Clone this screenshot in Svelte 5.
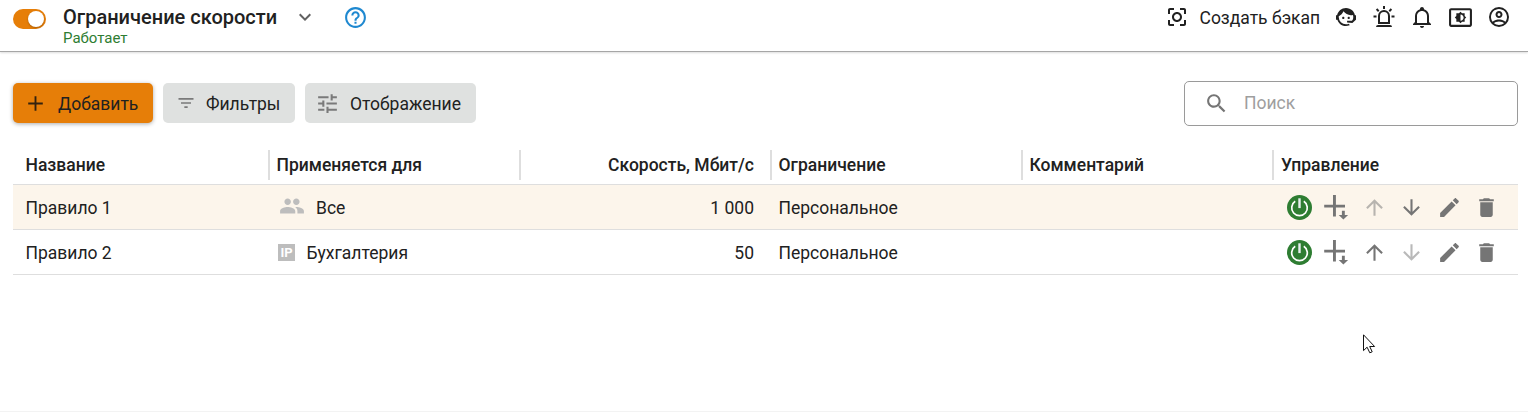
<script>
  const icons = {
    plus: 'M19 12.9h-6.1V19h-1.8v-6.1H5v-1.8h6.1V5h1.8v6.1H19z',
    filter: 'M10 18h4v-2h-4v2zM3 6v2h18V6H3zm3 7h12v-2H6v2z',
    tune: 'M3 17v2h6v-2H3zM3 5v2h10V5H3zm10 16v-2h8v-2h-8v-2h-2v6h2zM7 9v2H3v2h4v2h2V9H7zm14 4v-2H11v2h10zm-6-4h2V7h4V5h-4V3h-2v6z',
    search: 'M15.5 14h-.79l-.28-.27C15.41 12.59 16 11.11 16 9.5 16 5.91 13.09 3 9.5 3S3 5.91 3 9.5 5.91 16 9.5 16c1.61 0 3.09-.59 4.23-1.57l.27.28v.79l5 4.99L20.49 19l-4.99-5zm-6 0C7.01 14 5 11.99 5 9.5S7.01 5 9.5 5 14 7.01 14 9.5 11.99 14 9.5 14z',
    chevron: 'M16.59 8.59 12 13.17 7.41 8.59 6 10l6 6 6-6z',
    help: 'M11 18h2v-2h-2v2zm1-16C6.48 2 2 6.48 2 12s4.48 10 10 10 10-4.48 10-10S17.52 2 12 2zm0 18c-4.41 0-8-3.59-8-8s3.59-8 8-8 8 3.59 8 8-3.59 8-8 8zm0-14c-2.21 0-4 1.79-4 4h2c0-1.1.9-2 2-2s2 .9 2 2c0 2-3 1.75-3 5h2c0-2.25 3-2.5 3-5 0-2.21-1.79-4-4-4z',
    backup: 'M5 15H3v4c0 1.1.9 2 2 2h4v-2H5v-4zM5 5h4V3H5c-1.1 0-2 .9-2 2v4h2V5zm14-2h-4v2h4v4h2V5c0-1.1-.9-2-2-2zm0 16h-4v2h4c1.1 0 2-.9 2-2v-4h-2v4zM12 7c-2.76 0-5 2.24-5 5s2.24 5 5 5 5-2.24 5-5-2.24-5-5-5zm0 8c-1.65 0-3-1.35-3-3s1.35-3 3-3 3 1.35 3 3-1.35 3-3 3z',
    agent: 'M18.72,14.76C19.07,13.91 19.26,13 19.26,12C19.26,11.28 19.15,10.59 18.96,9.95C18.31,10.1 17.63,10.18 16.92,10.18C13.86,10.18 11.15,8.67 9.5,6.34C8.61,8.5 6.91,10.26 4.77,11.22C4.73,11.47 4.73,11.74 4.73,12A7.27,7.27 0 0,0 12,19.27C13.05,19.27 14.06,19.04 14.97,18.63C15.54,19.72 15.8,20.26 15.78,20.26C14.14,20.81 12.87,21.08 12,21.08C9.58,21.08 7.27,20.13 5.57,18.42C4.53,17.38 3.76,16.11 3.33,14.73H2V10.18H3.09C3.93,6.04 7.6,2.92 12,2.92C14.4,2.92 16.71,3.87 18.42,5.58C19.69,6.84 20.54,8.45 20.89,10.18H22V14.73H21.94L18.38,18L13.08,17.4V15.73H17.91L18.72,14.76M9.27,11.77C9.57,11.77 9.86,11.89 10.07,12.11C10.28,12.32 10.4,12.61 10.4,12.91C10.4,13.21 10.28,13.5 10.07,13.71C9.86,13.92 9.57,14.04 9.27,14.04C8.64,14.04 8.13,13.54 8.13,12.91C8.13,12.28 8.64,11.77 9.27,11.77M14.72,11.77C15.35,11.77 15.85,12.28 15.85,12.91C15.85,13.54 15.35,14.04 14.72,14.04C14.09,14.04 13.58,13.54 13.58,12.91A1.14,1.14 0 0,1 14.72,11.77Z',
    siren: 'M6,6.9L3.87,4.78L5.28,3.37L7.4,5.5L6,6.9M13,1V4H11V1H13M20.13,4.78L18,6.9L16.6,5.5L18.72,3.37L20.13,4.78M4.5,10.5V12.5H1.5V10.5H4.5M19.5,10.5H22.5V12.5H19.5V10.5M6,20H18A2,2 0 0,1 20,22H4A2,2 0 0,1 6,20M12,5A6,6 0 0,1 18,11V19H6V11A6,6 0 0,1 12,5M12,7A4,4 0 0,0 8,11V17H16V11A4,4 0 0,0 12,7Z',
    bell: 'M10 21H14C14 22.1 13.1 23 12 23S10 22.1 10 21M21 19V20H3V19L5 17V11C5 7.9 7 5.2 10 4.3V4C10 2.9 10.9 2 12 2S14 2.9 14 4V4.3C17 5.2 19 7.9 19 11V17L21 19M17 11C17 8.2 14.8 6 12 6S7 8.2 7 11V18H17V11Z',
    brightness: 'M21 3H3c-1.1 0-2 .9-2 2v14c0 1.1.9 2 2 2h18c1.1 0 2-.9 2-2V5c0-1.1-.9-2-2-2zm0 16.01H3V4.99h18v14.02zM8 16h2.5l1.5 1.5 1.5-1.5H16v-2.5l1.5-1.5-1.5-1.5V8h-2.5L12 6.5 10.5 8H8v2.5L6.5 12 8 13.5V16zm4-7c1.66 0 3 1.34 3 3s-1.34 3-3 3V9z',
    account: 'M12,2A10,10 0 0,0 2,12A10,10 0 0,0 12,22A10,10 0 0,0 22,12A10,10 0 0,0 12,2M7.07,18.28C7.5,17.38 10.12,16.5 12,16.5C13.88,16.5 16.5,17.38 16.93,18.28C15.57,19.36 13.86,20 12,20C10.14,20 8.43,19.36 7.07,18.28M18.36,16.83C16.93,15.09 13.46,14.5 12,14.5C10.54,14.5 7.07,15.09 5.64,16.83C4.62,15.5 4,13.82 4,12C4,7.59 7.59,4 12,4C16.41,4 20,7.59 20,12C20,13.82 19.38,15.5 18.36,16.83M12,6C10.06,6 8.5,7.56 8.5,9.5C8.5,11.44 10.06,13 12,13C13.94,13 15.5,11.44 15.5,9.5C15.5,7.56 13.94,6 12,6M12,11A1.5,1.5 0 0,1 10.5,9.5A1.5,1.5 0 0,1 12,8A1.5,1.5 0 0,1 13.5,9.5A1.5,1.5 0 0,1 12,11Z',
    people: 'M16 11c1.66 0 2.99-1.34 2.99-3S17.66 5 16 5c-1.66 0-3 1.34-3 3s1.34 3 3 3zm-8 0c1.66 0 2.99-1.34 2.99-3S9.66 5 8 5C6.34 5 5 6.34 5 8s1.34 3 3 3zm0 2c-2.33 0-7 1.17-7 3.5V19h14v-2.5c0-2.33-4.67-3.5-7-3.5zm8 0c-.29 0-.62.02-.97.05 1.16.84 1.97 1.97 1.97 3.45V19h6v-2.5c0-2.33-4.67-3.5-7-3.5z',
    up: 'm4 12 1.41 1.41L11 7.83V20h2V7.83l5.58 5.59L20 12l-8-8-8 8z',
    down: 'm20 12-1.41-1.41L13 16.17V4h-2v12.17l-5.58-5.59L4 12l8 8 8-8z',
    edit: 'M3 17.25V21h3.75L17.81 9.94l-3.75-3.75L3 17.25zM20.71 7.04c.39-.39.39-1.02 0-1.41l-2.34-2.34c-.39-.39-1.02-.39-1.41 0l-1.83 1.83 3.75 3.75 1.83-1.83z',
    trash: 'M6 19c0 1.1.9 2 2 2h8c1.1 0 2-.9 2-2V7H6v12zM19 4h-3.5l-1-1h-5l-1 1H5v2h14V4z'
  };

  const rows = [
    { name: 'Правило 1', target: 'Все', kind: 'people', speed: '1 000', limit: 'Персональное', first: true },
    { name: 'Правило 2', target: 'Бухгалтерия', kind: 'ip', speed: '50', limit: 'Персональное', last: true }
  ];
</script>

{#snippet icon(name, size = 24)}
  <svg class="icon" width={size} height={size} viewBox="0 0 24 24" fill="currentColor"><path d={icons[name]} /></svg>
{/snippet}

<div class="page">
  <header>
    <span class="switch"><i></i></span>
    <div class="title">
      <h1>Ограничение скорости</h1>
      <span class="status">Работает</span>
    </div>
    <span class="chev">{@render icon('chevron')}</span>
    <span class="help">{@render icon('help', 25)}</span>
    <div class="tools">
      {@render icon('backup')}
      <span class="backup">Создать бэкап</span>
      <nav>
        {@render icon('agent')}
        {@render icon('siren')}
        {@render icon('bell')}
        {@render icon('brightness', 25)}
        {@render icon('account')}
      </nav>
    </div>
  </header>

  <div class="toolbar">
    <button class="add">{@render icon('plus', 25)}<span>Добавить</span></button>
    <button class="filters">{@render icon('filter', 20)}<span>Фильтры</span></button>
    <button class="display">{@render icon('tune', 25)}<span>Отображение</span></button>
    <div class="search">{@render icon('search', 25)}<span>Поиск</span></div>
  </div>

  <div class="table">
    <div class="row head">
      <div class="cell">Название</div>
      <div class="cell">Применяется для</div>
      <div class="cell num">Скорость, Мбит/с</div>
      <div class="cell">Ограничение</div>
      <div class="cell">Комментарий</div>
      <div class="cell">Управление</div>
    </div>
    {#each rows as row}
      <div class="row" class:active={row.first}>
        <div class="cell">{row.name}</div>
        <div class="cell">
          {#if row.kind === 'people'}
            <span class="people">{@render icon('people', 26)}</span>
          {:else}
            <span class="ip">IP</span>
          {/if}
          {row.target}
        </div>
        <div class="cell num">{row.speed}</div>
        <div class="cell">{row.limit}</div>
        <div class="cell"></div>
        <div class="actions">
          <svg class="icon" width="25" height="25" viewBox="0 0 25 25" fill="none">
            <circle cx="12.5" cy="12.5" r="12.5" fill="#2e7d32" />
            <path d="M8.2 6.3a7.8 7.8 0 1 0 8.6 0" stroke="#fff" stroke-width="1.7" />
            <path d="M12.5 3.3v9.8" stroke="#e9eef0" stroke-width="2.4" />
          </svg>
          <svg class="icon" width="25" height="25" viewBox="0 0 25 25" fill="currentColor">
            <path d="M9 0h2.9v9.8H21v2.8h-9.1v9H9v-9H.2V9.8H9zM17.9 15.7h2.9V20h3.3l-4.7 4.4-4.7-4.4h3.2z" />
          </svg>
          <span class:dim={row.first}>{@render icon('up', 25)}</span>
          <span class:dim={row.last}>{@render icon('down', 25)}</span>
          {@render icon('edit', 25)}
          {@render icon('trash', 25)}
        </div>
      </div>
    {/each}
  </div>

  <svg class="cursor" width="13" height="20" viewBox="0 0 13 20"><path d="M.5 .8v15.8l3.6-3.4 2.7 5.6 2.4-1-2.5-5.3h4.9z" fill="#fff" stroke="#111" /></svg>
</div>

<style>
  :global(body) { background: #fff; }
  .page { position: relative; box-sizing: border-box; height: 412px; overflow: hidden; border-bottom: 1px solid #f3f3f3; font-family: Roboto, sans-serif; font-size: 17.5px; line-height: 22px; color: #212121; }
  .icon { display: block; flex: none; }
  header { display: flex; align-items: flex-start; height: 51px; border-bottom: 1px solid #a6a6a6; box-shadow: 0 1px 2px #0002; }
  .switch { box-sizing: border-box; width: 33px; height: 20px; margin: 9px 17px 0 13px; padding: 2px; border-radius: 10px; background: #e67e08; }
  .switch i { display: block; width: 16px; height: 16px; margin-left: 13px; border-radius: 50%; background: #fff; box-shadow: 0 1px 2px #0004; }
  .title { display: flex; flex-direction: column; width: 230px; }
  h1 { margin: 5px 0 0; font-size: 20px; font-weight: 500; line-height: 24px; white-space: nowrap; }
  .status { font-size: 15px; line-height: 18px; color: #2e7d32; }
  .chev { margin-top: 5px; color: #616161; }
  .help { margin: 5px 0 0 26px; color: #1e88d0; }
  .tools { display: flex; align-items: center; height: 24px; margin: 5px 17px 0 auto; }
  .backup { width: 134.5px; margin: 2px 0 0 10.5px; white-space: nowrap; }
  nav { display: flex; align-items: center; gap: 14px; }
  .toolbar { display: flex; gap: 10px; height: 45px; padding: 0 10px 0 13px; margin-top: 29px; }
  button { display: flex; align-items: center; box-sizing: border-box; height: 40px; margin: 2px 0 0; padding: 0; border: 0; border-radius: 5px; background: #dfe1e0; font: inherit; color: inherit; white-space: nowrap; }
  button .icon { color: #7a7a7a; }
  button span { margin: 2px 0 0 10px; }
  .add { width: 140px; padding-left: 10px; background: #e67e08; box-shadow: 0 1px 4px #0005; }
  .add .icon { color: #33220f; }
  .filters { width: 132px; padding-left: 13px; }
  .display { width: 171px; padding-left: 10px; }
  .search { display: flex; align-items: center; box-sizing: border-box; width: 334px; height: 45px; margin-left: auto; padding-left: 19px; border: 1px solid #9a9a9a; border-radius: 5px; color: #757575; }
  .search span { margin-left: 15px; padding-bottom: 1px; color: #9e9e9e; }
  .table { margin: 19px 10px 0 13px; }
  .row { display: grid; grid-template-columns: 257px repeat(4, 251px) 1fr; height: 44px; border-bottom: 1px solid #dedede; }
  .row.active { background: #fcf5eb; }
  .cell { display: flex; align-items: center; padding: 2px 18px 0 6.5px; white-space: nowrap; }
  .cell:first-child { padding-left: 12.5px; }
  .num { justify-content: flex-end; }
  .head { height: 39px; font-weight: 500; }
  .head .cell { height: 30px; margin-top: 5px; padding-top: 0; box-sizing: border-box; border-right: 2px solid #dedede; }
  .head .num { padding-right: 16px; }
  .head .cell:last-child { border-right: 0; padding-left: 7px; }
  .people { margin: 0 11px 4px 2.5px; color: #bdbdbd; }
  .ip { width: 17px; height: 17px; margin: 0 11.5px 2px 1.5px; background: #bdbdbd; color: #fff; font-size: 13px; font-weight: 700; line-height: 17px; text-align: center; }
  .actions { display: flex; align-items: center; gap: 12.4px; padding-left: 13px; color: #757575; }
  .dim { opacity: .5; }
  .cursor { position: absolute; left: 1363px; top: 334px; }
</style>
